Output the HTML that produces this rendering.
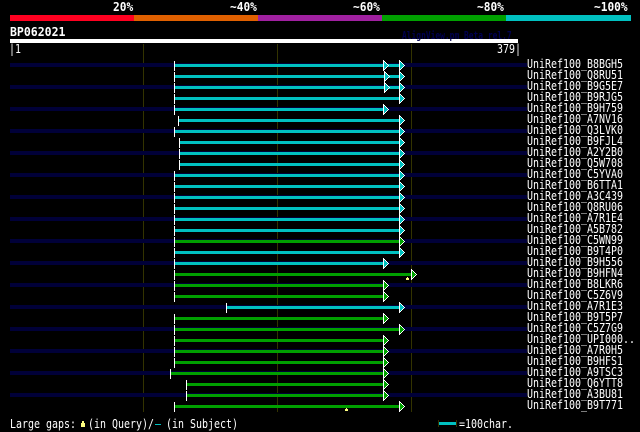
<!DOCTYPE html>
<html><head><meta charset="utf-8"><style>
html,body{margin:0;padding:0;background:#000;width:640px;height:432px;overflow:hidden}
svg{position:absolute;left:0;top:0}
.t{position:absolute;margin:0;color:#fff;font:12px/11px "DejaVu Sans Mono",monospace;white-space:pre;transform:scaleX(.83);transform-origin:0 0}
.b{font-weight:bold;font-size:12px;transform:scaleX(.93)}
</style></head><body>
<svg width="640" height="432" shape-rendering="crispEdges">
<defs>
<g id="w" fill="#fff"><rect x="0" y="-5" width="1" height="11"/><rect x="1" y="-4" width="1" height="1"/><rect x="1" y="4" width="1" height="1"/><rect x="2" y="-3" width="1" height="1"/><rect x="2" y="3" width="1" height="1"/><rect x="3" y="-2" width="1" height="1"/><rect x="3" y="2" width="1" height="1"/><rect x="4" y="-1" width="1" height="1"/><rect x="4" y="1" width="1" height="1"/><rect x="5" y="0" width="1" height="1"/></g>
<g id="c"><use href="#w"/><g fill="#00c0c0"><rect x="1" y="-3" width="1" height="7"/><rect x="2" y="-2" width="1" height="5"/><rect x="3" y="-1" width="1" height="3"/><rect x="4" y="0" width="1" height="1"/></g></g>
<g id="g"><use href="#w"/><g fill="#00a000"><rect x="1" y="-3" width="1" height="7"/><rect x="2" y="-2" width="1" height="5"/><rect x="3" y="-1" width="1" height="3"/><rect x="4" y="0" width="1" height="1"/></g></g>
</defs>
<rect x="10" y="15" width="124" height="6" fill="#ff0020"/><rect x="134" y="15" width="124" height="6" fill="#e06000"/><rect x="258" y="15" width="124" height="6" fill="#a020a0"/><rect x="382" y="15" width="124" height="6" fill="#00a000"/><rect x="506" y="15" width="125" height="6" fill="#00c0c0"/>
<rect x="10" y="39" width="508" height="4" fill="#fff"/>
<g fill="#333300"><rect x="143" y="44" width="1" height="368"/><rect x="277" y="44" width="1" height="368"/><rect x="411" y="44" width="1" height="368"/></g>
<g fill="#000038">
<rect x="10" y="63" width="517" height="4"/><rect x="10" y="85" width="517" height="4"/><rect x="10" y="107" width="517" height="4"/><rect x="10" y="129" width="517" height="4"/><rect x="10" y="151" width="517" height="4"/><rect x="10" y="173" width="517" height="4"/><rect x="10" y="195" width="517" height="4"/><rect x="10" y="217" width="517" height="4"/><rect x="10" y="239" width="517" height="4"/><rect x="10" y="261" width="517" height="4"/><rect x="10" y="283" width="517" height="4"/><rect x="10" y="305" width="517" height="4"/><rect x="10" y="327" width="517" height="4"/><rect x="10" y="349" width="517" height="4"/><rect x="10" y="371" width="517" height="4"/><rect x="10" y="393" width="517" height="4"/>
</g>
<g fill="#00c0c0">
<rect x="175" y="64" width="225" height="3"/><rect x="175" y="75" width="225" height="3"/><rect x="175" y="86" width="225" height="3"/><rect x="175" y="97" width="225" height="3"/><rect x="175" y="108" width="209" height="3"/><rect x="179" y="119" width="221" height="3"/><rect x="175" y="130" width="225" height="3"/><rect x="180" y="141" width="220" height="3"/><rect x="180" y="152" width="220" height="3"/><rect x="180" y="163" width="220" height="3"/><rect x="175" y="174" width="225" height="3"/><rect x="175" y="185" width="225" height="3"/><rect x="175" y="196" width="225" height="3"/><rect x="175" y="207" width="225" height="3"/><rect x="175" y="218" width="225" height="3"/><rect x="175" y="229" width="225" height="3"/><rect x="175" y="251" width="225" height="3"/><rect x="175" y="262" width="209" height="3"/><rect x="227" y="306" width="173" height="3"/>
</g>
<g fill="#00a000">
<rect x="175" y="240" width="225" height="3"/><rect x="175" y="273" width="237" height="3"/><rect x="175" y="284" width="209" height="3"/><rect x="175" y="295" width="209" height="3"/><rect x="175" y="317" width="209" height="3"/><rect x="175" y="328" width="225" height="3"/><rect x="175" y="339" width="209" height="3"/><rect x="175" y="350" width="209" height="3"/><rect x="175" y="361" width="209" height="3"/><rect x="171" y="372" width="213" height="3"/><rect x="187" y="383" width="197" height="3"/><rect x="187" y="394" width="197" height="3"/><rect x="175" y="405" width="225" height="3"/>
</g>
<g fill="#fff">
<rect x="174" y="61" width="1" height="10"/><rect x="174" y="72" width="1" height="10"/><rect x="174" y="83" width="1" height="10"/><rect x="174" y="94" width="1" height="10"/><rect x="174" y="105" width="1" height="10"/><rect x="178" y="116" width="1" height="10"/><rect x="174" y="127" width="1" height="10"/><rect x="179" y="138" width="1" height="10"/><rect x="179" y="149" width="1" height="10"/><rect x="179" y="160" width="1" height="10"/><rect x="174" y="171" width="1" height="10"/><rect x="174" y="182" width="1" height="10"/><rect x="174" y="193" width="1" height="10"/><rect x="174" y="204" width="1" height="10"/><rect x="174" y="215" width="1" height="10"/><rect x="174" y="226" width="1" height="10"/><rect x="174" y="237" width="1" height="10"/><rect x="174" y="248" width="1" height="10"/><rect x="174" y="259" width="1" height="10"/><rect x="174" y="270" width="1" height="10"/><rect x="174" y="281" width="1" height="10"/><rect x="174" y="292" width="1" height="10"/><rect x="226" y="303" width="1" height="10"/><rect x="174" y="314" width="1" height="10"/><rect x="174" y="325" width="1" height="10"/><rect x="174" y="336" width="1" height="10"/><rect x="174" y="347" width="1" height="10"/><rect x="174" y="358" width="1" height="10"/><rect x="170" y="369" width="1" height="10"/><rect x="186" y="380" width="1" height="10"/><rect x="186" y="391" width="1" height="10"/><rect x="174" y="402" width="1" height="10"/>
</g>
<use href="#c" x="383" y="65"/><use href="#c" x="399" y="65"/>
<use href="#c" x="384" y="76"/><use href="#c" x="399" y="76"/>
<use href="#c" x="384" y="87"/><use href="#c" x="399" y="87"/>
<use href="#c" x="399" y="98"/>
<use href="#c" x="383" y="109"/>
<use href="#c" x="399" y="120"/><use href="#c" x="399" y="131"/><use href="#c" x="399" y="142"/><use href="#c" x="399" y="153"/><use href="#c" x="399" y="164"/><use href="#c" x="399" y="175"/><use href="#c" x="399" y="186"/><use href="#c" x="399" y="197"/><use href="#c" x="399" y="208"/><use href="#c" x="399" y="219"/><use href="#c" x="399" y="230"/>
<use href="#g" x="399" y="241"/>
<use href="#c" x="399" y="252"/>
<use href="#c" x="383" y="263"/>
<use href="#g" x="411" y="274"/>
<use href="#g" x="383" y="285"/><use href="#g" x="383" y="296"/>
<use href="#c" x="399" y="307"/>
<use href="#g" x="383" y="318"/>
<use href="#g" x="399" y="329"/>
<use href="#g" x="383" y="340"/><use href="#g" x="383" y="351"/><use href="#g" x="383" y="362"/><use href="#g" x="383" y="373"/><use href="#g" x="383" y="384"/><use href="#g" x="383" y="395"/>
<use href="#g" x="399" y="406"/>
<g fill="#ffff80"><rect x="407" y="277" width="1" height="1"/><rect x="406" y="278" width="3" height="2"/><rect x="346" y="408" width="1" height="1"/><rect x="345" y="409" width="3" height="2"/><rect x="82" y="421" width="2" height="2"/><rect x="81" y="423" width="4" height="4"/></g>
<rect x="155" y="424" width="6" height="1" fill="#00c0c0"/>
<rect x="438" y="420" width="1" height="7" fill="#333300"/><rect x="456" y="420" width="1" height="7" fill="#333300"/><rect x="439" y="422" width="17" height="3" fill="#00c0c0"/>
</svg>
<pre class="t b" style="left:113px;top:2px">20%</pre>
<pre class="t b" style="left:230px;top:2px">~40%</pre>
<pre class="t b" style="left:353px;top:2px">~60%</pre>
<pre class="t b" style="left:477px;top:2px">~80%</pre>
<pre class="t b" style="left:594px;top:2px">~100%</pre>
<pre class="t b" style="left:10px;top:27px;transform:scaleX(.96)">BP062021</pre>
<pre class="t" style="left:402px;top:30px;color:#000050;font-weight:bold;font-size:11px;transform:scaleX(.72)">AlignView.pm Beta rel.7</pre>
<pre class="t" style="left:9px;top:44px">|1</pre>
<pre class="t" style="left:497px;top:44px">379|</pre>
<pre class="t" style="left:527px;top:59px">UniRef100_B8BGH5
UniRef100_Q8RU51
UniRef100_B9G5E7
UniRef100_B9RJG5
UniRef100_B9H759
UniRef100_A7NV16
UniRef100_Q3LVK0
UniRef100_B9FJL4
UniRef100_A2Y2B0
UniRef100_Q5W708
UniRef100_C5YVA0
UniRef100_B6TTA1
UniRef100_A3C439
UniRef100_Q8RU06
UniRef100_A7R1E4
UniRef100_A5B782
UniRef100_C5WN99
UniRef100_B9T4P0
UniRef100_B9H556
UniRef100_B9HFN4
UniRef100_B8LKR6
UniRef100_C5Z6V9
UniRef100_A7R1E3
UniRef100_B9T5P7
UniRef100_C5Z7G9
UniRef100_UPI000..
UniRef100_A7R0H5
UniRef100_B9HFS1
UniRef100_A9TSC3
UniRef100_Q6YTT8
UniRef100_A3BU81
UniRef100_B9T771</pre>
<pre class="t" style="left:10px;top:419px">Large gaps:</pre>
<pre class="t" style="left:88px;top:419px">(in Query)/</pre>
<pre class="t" style="left:166px;top:419px">(in Subject)</pre>
<pre class="t" style="left:459px;top:419px">=100char.</pre>
</body></html>
